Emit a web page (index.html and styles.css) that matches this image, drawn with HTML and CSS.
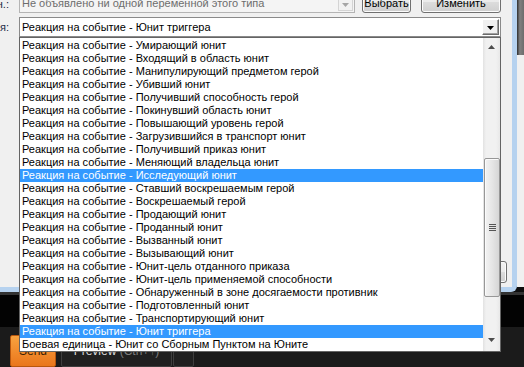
FILE: index.html
```html
<!DOCTYPE html>
<html lang="ru">
<head>
  <meta charset="UTF-8" />
  <title>Триггер</title>
  <link rel="stylesheet" href="styles.css">
</head>
<body>
  <div class="top">
    <div class="window">
      <div class="row row-first">
        <div class="label"><span>Перемен.:</span></div>
        <div class="combo combo-disabled">
          <span class="combo-text">Не объявлено ни одной переменной этого типа</span>
          <span class="combo-arrow">
            <svg width="7" height="4" viewBox="0 0 7 4"><polygon points="0,0 7,0 3.5,4" fill="#a6a6a6"/></svg>
          </span>
        </div>
        <button class="btn btn-pick">Выбрать</button>
        <button class="btn btn-edit">Изменить</button>
      </div>
      <div class="row row-second">
        <div class="label"><span>Функция:</span></div>
        <div class="combo combo-open">
          <span class="combo-text">Реакция на событие - Юнит триггера</span>
          <span class="combo-drop">
            <svg width="7" height="4" viewBox="0 0 7 4"><polygon points="0,0 7,0 3.5,4" fill="#000"/></svg>
          </span>
        </div>
      </div>
      <div class="dialog-footer">
        <button class="btn btn-ok">OK</button>
      </div>
    </div>
    <div class="side">
      <div class="side-dark"></div>
      <div class="side-light"></div>
    </div>
  </div>

  <div class="bottom">
    <div class="bottom-line"></div>
    <div class="bottom-gap"></div>
    <div class="toolbar">
      <button class="send">Send</button>
      <button class="preview">Preview <span class="hint">(Ctrl+↑)</span></button>
      <button class="more">
        <svg width="7" height="4" viewBox="0 0 7 4"><polygon points="0,0 7,0 3.5,4" fill="#e6e6e6"/></svg>
      </button>
    </div>
  </div>

  <div class="dropdown">
    <ul class="options">
      <li class="option">Реакция на событие - Умирающий юнит</li>
      <li class="option">Реакция на событие - Входящий в область юнит</li>
      <li class="option">Реакция на событие - Манипулирующий предметом герой</li>
      <li class="option">Реакция на событие - Убивший юнит</li>
      <li class="option">Реакция на событие - Получивший способность герой</li>
      <li class="option">Реакция на событие - Покинувший область юнит</li>
      <li class="option">Реакция на событие - Повышающий уровень герой</li>
      <li class="option">Реакция на событие - Загрузившийся в транспорт юнит</li>
      <li class="option">Реакция на событие - Получивший приказ юнит</li>
      <li class="option">Реакция на событие - Меняющий владельца юнит</li>
      <li class="option is-selected">Реакция на событие - Исследующий юнит</li>
      <li class="option">Реакция на событие - Ставший воскрешаемым герой</li>
      <li class="option">Реакция на событие - Воскрешаемый герой</li>
      <li class="option">Реакция на событие - Продающий юнит</li>
      <li class="option">Реакция на событие - Проданный юнит</li>
      <li class="option">Реакция на событие - Вызванный юнит</li>
      <li class="option">Реакция на событие - Вызывающий юнит</li>
      <li class="option">Реакция на событие - Юнит-цель отданного приказа</li>
      <li class="option">Реакция на событие - Юнит-цель применяемой способности</li>
      <li class="option">Реакция на событие - Обнаруженный в зоне досягаемости противник</li>
      <li class="option">Реакция на событие - Подготовленный юнит</li>
      <li class="option">Реакция на событие - Транспортирующий юнит</li>
      <li class="option is-selected">Реакция на событие - Юнит триггера</li>
      <li class="option">Боевая единица - Юнит со Сборным Пунктом на Юните</li>
    </ul>
    <div class="scrollbar">
      <div class="sb-btn">
        <svg width="7" height="4" viewBox="0 0 7 4"><polygon points="3.5,0 7,4 0,4" fill="#4d4d4d"/></svg>
      </div>
      <div class="sb-track">
        <div class="sb-thumb">
          <svg width="7" height="8" viewBox="0 0 7 8">
            <rect x="0" y="0" width="7" height="1" fill="#555"/>
            <rect x="0" y="2" width="7" height="1" fill="#555"/>
            <rect x="0" y="4" width="7" height="1" fill="#555"/>
            <rect x="0" y="6" width="7" height="1" fill="#555"/>
          </svg>
        </div>
      </div>
      <div class="sb-btn sb-btn-down">
        <svg width="7" height="4" viewBox="0 0 7 4"><polygon points="0,0 7,0 3.5,4" fill="#4d4d4d"/></svg>
      </div>
    </div>
  </div>
</body>
</html>
```

FILE: styles.css
```css
body {
  margin: 0;
  width: 524px;
  height: 367px;
  overflow: hidden;
  position: relative;
  background: #111;
  font-family: "Liberation Sans", Arial, sans-serif;
  font-size: 11px;
  color: #000;
}

button {
  font-family: inherit;
  cursor: pointer;
}

.top {
  display: flex;
  height: 292px;
  background: #0d0d0d;
}

.window {
  width: 517px;
  height: 292px;
  box-sizing: border-box;
  background: #f0f0f0;
  border-right: 5px solid #b6d2ef;
  border-bottom: 5px solid #b6d2ef;
  border-bottom-right-radius: 6px;
  display: flex;
  flex-direction: column;
}

.row {
  display: flex;
  align-items: flex-end;
}

.row-first {
  height: 23px;
  margin-top: -10px;
}

.row-second {
  margin-top: 4px;
}

.label {
  width: 19px;
  flex-shrink: 0;
  display: flex;
  justify-content: flex-end;
  overflow: hidden;
  padding-right: 10px;
  box-sizing: border-box;
  white-space: nowrap;
  color: #1b2a44;
}

.label span {
  flex-shrink: 0;
}

.row-first .label {
  height: 18px;
  line-height: 18px;
}

.row-second .label {
  height: 20px;
  line-height: 20px;
}

.combo {
  display: flex;
  box-sizing: border-box;
  border: 1px solid #8a8a8a;
  background: #fff;
  white-space: nowrap;
}

.combo-text {
  flex: 1;
  padding-left: 2px;
  overflow: hidden;
}

.combo-disabled {
  width: 336px;
  height: 21px;
  background: #f4f4f4;
  border-color: #b4b4b4;
  color: #6d6d6d;
}

.combo-disabled .combo-text {
  line-height: 19px;
  padding-top: 1px;
}

.combo-arrow {
  width: 15px;
  margin: 0 1px 1px 0;
  box-sizing: border-box;
  border: 1px solid #d4d4d4;
  background: #f2f2f2;
  display: flex;
  justify-content: center;
  padding-top: 9px;
}

.combo-open {
  width: 482px;
  height: 20px;
}

.combo-open .combo-text {
  line-height: 18px;
}

.combo-drop {
  width: 17px;
  height: 16px;
  margin: 1px 1px 0 0;
  box-sizing: border-box;
  background: #f0f0f0;
  border-top: 1px solid #fff;
  border-left: 1px solid #fff;
  border-right: 1px solid #6b6b6b;
  border-bottom: 1px solid #6b6b6b;
  box-shadow: inset -1px -1px 0 #a0a0a0;
  display: flex;
  justify-content: center;
  padding-top: 6px;
}

.btn {
  height: 23px;
  box-sizing: border-box;
  border: 1px solid #707070;
  border-radius: 3px;
  background: linear-gradient(#f3f3f3, #ebebeb 50%, #dddddd 51%, #cfcfcf);
  box-shadow: inset 0 0 0 1px #fcfcfc;
  font-size: 11px;
  color: #000;
  padding: 3px 0 0;
  line-height: 17px;
}

.btn-pick {
  width: 49px;
  margin-left: 7px;
}

.btn-edit {
  width: 80px;
  margin-left: 10px;
}

.dialog-footer {
  margin-top: auto;
  display: flex;
  justify-content: flex-end;
  padding: 0 5px 4px 0;
}

.btn-ok {
  width: 75px;
  height: 22px;
}

.side {
  width: 7px;
  display: flex;
  flex-direction: column;
}

.side-dark {
  height: 55px;
  background: linear-gradient(90deg, #2e2e2e, #808080 40%, #6c6c6c);
}

.side-light {
  flex: 1;
  margin-bottom: 5px;
  background: #f0f0f0;
}

.bottom {
  height: 75px;
  display: flex;
  flex-direction: column;
}

.bottom-line {
  height: 3px;
  background: #333;
}

.bottom-gap {
  height: 35px;
  background: #030303;
}

.toolbar {
  flex: 1;
  background: #1b1b1b;
  display: flex;
  align-items: flex-start;
  gap: 5px;
  padding: 8px 0 0 10px;
}

.send {
  width: 46px;
  height: 32px;
  border: 1px solid #b8570e;
  border-radius: 2px;
  background: linear-gradient(#f8a23f, #ea761c);
  color: #3b1e05;
  font-size: 12px;
  padding: 0;
  line-height: 30px;
}

.preview {
  width: 111px;
  height: 32px;
  border: 1px solid #3e3e3e;
  border-radius: 2px;
  background: #202020;
  color: #dcdcdc;
  font-size: 12px;
  padding: 0;
  line-height: 30px;
}

.hint {
  color: #7c7c7c;
}

.more {
  width: 21px;
  height: 32px;
  margin-left: -4px;
  border: 1px solid #3e3e3e;
  border-radius: 2px;
  background: #202020;
  padding: 12px 0 0;
  display: flex;
  justify-content: center;
  align-items: flex-start;
}

.dropdown {
  position: absolute;
  left: 19px;
  top: 37px;
  width: 482px;
  height: 315px;
  box-sizing: border-box;
  border: 1px solid #646464;
  background: #fff;
  display: flex;
}

.options {
  flex: 1;
  list-style: none;
  margin: 0;
  padding: 1px 0 0;
}

.option {
  height: 13px;
  line-height: 13px;
  padding-left: 2px;
  white-space: nowrap;
  color: #000;
}

.option.is-selected {
  background: #3399ff;
  color: #fff;
}

.scrollbar {
  width: 17px;
  display: flex;
  flex-direction: column;
  background: linear-gradient(90deg, #e2e2e2, #f1f1f1 3px, #f1f1f1 13px, #e8e8e8);
}

.sb-btn {
  height: 17px;
  display: flex;
  justify-content: center;
  padding-top: 7px;
  box-sizing: border-box;
}

.sb-btn-down {
  padding-top: 4px;
}

.sb-track {
  flex: 1;
}

.sb-thumb {
  margin: 103px 0 0 1px;
  width: 16px;
  height: 139px;
  box-sizing: border-box;
  border: 1px solid #979797;
  border-radius: 2px;
  background: linear-gradient(90deg, #f3f3f3, #e6e6e6 50%, #d6d6d6);
  box-shadow: inset 1px 1px 0 #fbfbfb;
  display: flex;
  justify-content: center;
  align-items: center;
}
```
